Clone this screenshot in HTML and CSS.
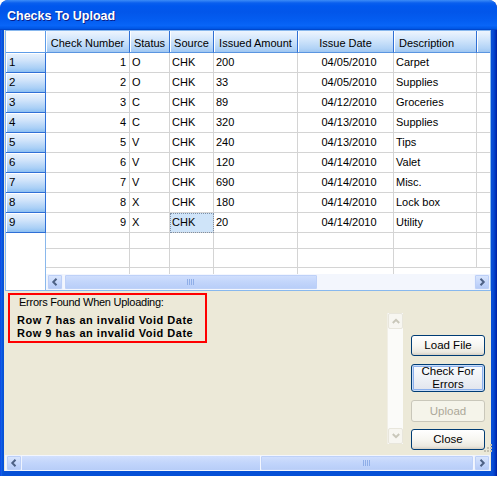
FILE: index.html
```html
<!DOCTYPE html>
<html>
<head>
<meta charset="utf-8">
<title>Checks To Upload</title>
<link rel="stylesheet" href="styles.css">
</head>
<body>
<div class="window">
  <div class="titlebar">Checks To Upload</div>
  <div class="client">
    <div class="grid">
      <div class="rowhdrs">
        <div class="corner"></div>
        <div class="rh">1</div>
        <div class="rh">2</div>
        <div class="rh">3</div>
        <div class="rh">4</div>
        <div class="rh">5</div>
        <div class="rh">6</div>
        <div class="rh">7</div>
        <div class="rh">8</div>
        <div class="rh">9</div>
        <div class="rh-blank"></div>
      </div>
      <div class="gbody">
        <div class="hdr">
          <div class="hc c1">Check Number</div>
          <div class="hc c2">Status</div>
          <div class="hc c3">Source</div>
          <div class="hc c4">Issued Amount</div>
          <div class="hc c5">Issue Date</div>
          <div class="hc c6 left">Description</div>
          <div class="hc c7"></div>
        </div>
        <div class="row"><div class="cell c1 num">1</div><div class="cell c2">O</div><div class="cell c3">CHK</div><div class="cell c4">200</div><div class="cell c5 date">04/05/2010</div><div class="cell c6">Carpet</div><div class="cell c7"></div></div>
        <div class="row"><div class="cell c1 num">2</div><div class="cell c2">O</div><div class="cell c3">CHK</div><div class="cell c4">33</div><div class="cell c5 date">04/05/2010</div><div class="cell c6">Supplies</div><div class="cell c7"></div></div>
        <div class="row"><div class="cell c1 num">3</div><div class="cell c2">C</div><div class="cell c3">CHK</div><div class="cell c4">89</div><div class="cell c5 date">04/12/2010</div><div class="cell c6">Groceries</div><div class="cell c7"></div></div>
        <div class="row"><div class="cell c1 num">4</div><div class="cell c2">C</div><div class="cell c3">CHK</div><div class="cell c4">320</div><div class="cell c5 date">04/13/2010</div><div class="cell c6">Supplies</div><div class="cell c7"></div></div>
        <div class="row"><div class="cell c1 num">5</div><div class="cell c2">V</div><div class="cell c3">CHK</div><div class="cell c4">240</div><div class="cell c5 date">04/13/2010</div><div class="cell c6">Tips</div><div class="cell c7"></div></div>
        <div class="row"><div class="cell c1 num">6</div><div class="cell c2">V</div><div class="cell c3">CHK</div><div class="cell c4">120</div><div class="cell c5 date">04/14/2010</div><div class="cell c6">Valet</div><div class="cell c7"></div></div>
        <div class="row"><div class="cell c1 num">7</div><div class="cell c2">V</div><div class="cell c3">CHK</div><div class="cell c4">690</div><div class="cell c5 date">04/14/2010</div><div class="cell c6">Misc.</div><div class="cell c7"></div></div>
        <div class="row"><div class="cell c1 num">8</div><div class="cell c2">X</div><div class="cell c3">CHK</div><div class="cell c4">180</div><div class="cell c5 date">04/14/2010</div><div class="cell c6">Lock box</div><div class="cell c7"></div></div>
        <div class="row"><div class="cell c1 num">9</div><div class="cell c2">X</div><div class="cell c3 sel">CHK</div><div class="cell c4">20</div><div class="cell c5 date">04/14/2010</div><div class="cell c6">Utility</div><div class="cell c7"></div></div>
        <div class="row e1"><div class="cell c1"></div><div class="cell c2"></div><div class="cell c3"></div><div class="cell c4"></div><div class="cell c5"></div><div class="cell c6"></div><div class="cell c7"></div></div>
        <div class="row e2"><div class="cell c1"></div><div class="cell c2"></div><div class="cell c3"></div><div class="cell c4"></div><div class="cell c5"></div><div class="cell c6"></div><div class="cell c7"></div></div>
        <div class="row e3"><div class="cell c1"></div><div class="cell c2"></div><div class="cell c3"></div><div class="cell c4"></div><div class="cell c5"></div><div class="cell c6 nol"></div><div class="cell c7"></div></div>
        <div class="hsb">
          <div class="sbtn"><svg width="8" height="8" viewBox="0 0 8 8"><path d="M5.5 0.8 L2.3 4 L5.5 7.2" stroke="#4d6185" stroke-width="2" fill="none"/></svg></div>
          <div class="thumb t-grid"><svg width="8" height="6" viewBox="0 0 8 6"><path d="M0.5 0V6M2.5 0V6M4.5 0V6M6.5 0V6" stroke="#8faee8" stroke-width="1"/></svg></div>
          <div class="track"></div>
          <div class="sbtn"><svg width="8" height="8" viewBox="0 0 8 8"><path d="M2.5 0.8 L5.7 4 L2.5 7.2" stroke="#4d6185" stroke-width="2" fill="none"/></svg></div>
        </div>
      </div>
    </div>

    <div class="lower">
      <div class="errors">
        <div class="err-title">Errors Found When Uploading:</div>
        <div class="err-line">Row 7 has an invalid Void Date</div>
        <div class="err-line">Row 9 has an invalid Void Date</div>
      </div>
      <div class="vsb">
        <div class="vbtn"><svg width="8" height="6" viewBox="0 0 8 6"><path d="M0.8 5 L4 1.8 L7.2 5" stroke="#c9c7ba" stroke-width="2" fill="none"/></svg></div>
        <div class="vtrack"></div>
        <div class="vbtn"><svg width="8" height="6" viewBox="0 0 8 6"><path d="M0.8 1 L4 4.2 L7.2 1" stroke="#c9c7ba" stroke-width="2" fill="none"/></svg></div>
      </div>
      <div class="buttons">
        <div class="btn b-load">Load File</div>
        <div class="btn b-check default">Check For<br>Errors</div>
        <div class="btn b-upload disabled">Upload</div>
        <div class="btn b-close">Close</div>
      </div>
      <svg class="grip" width="8" height="10" viewBox="0 0 8 10">
        <rect x="6" y="0" width="2" height="2" fill="#c5c2b2"/>
        <rect x="3" y="3" width="2" height="2" fill="#c5c2b2"/>
        <rect x="6" y="3" width="2" height="2" fill="#c5c2b2"/>
        <rect x="0" y="6" width="2" height="2" fill="#c5c2b2"/>
        <rect x="3" y="6" width="2" height="2" fill="#c5c2b2"/>
        <rect x="6" y="6" width="2" height="2" fill="#c5c2b2"/>
      </svg>
    </div>

    <div class="hsb wide">
      <div class="sbtn"><svg width="8" height="8" viewBox="0 0 8 8"><path d="M5.5 0.8 L2.3 4 L5.5 7.2" stroke="#4d6185" stroke-width="2" fill="none"/></svg></div>
      <div class="track blue"></div>
      <div class="thumb t-wide"><svg width="8" height="6" viewBox="0 0 8 6"><path d="M0.5 0V6M2.5 0V6M4.5 0V6M6.5 0V6" stroke="#8faee8" stroke-width="1"/></svg></div>
      <div class="sbtn"><svg width="8" height="8" viewBox="0 0 8 8"><path d="M2.5 0.8 L5.7 4 L2.5 7.2" stroke="#4d6185" stroke-width="2" fill="none"/></svg></div>
    </div>
  </div>
</div>
</body>
</html>
```

FILE: styles.css
```css
* { box-sizing: border-box; }

body {
  margin: 0;
  background: #ffffff;
  font-family: "Liberation Sans", Arial, sans-serif;
  font-size: 11px;
  color: #000;
}

.window {
  width: 497px;
  height: 476px;
  border-radius: 8px 8px 0 0;
  background: linear-gradient(to right, #0831d9 0, #166aee 1px, #0855dd 2px, #0650d6 4px, #0650d6 491px, #0a4cd4 493px, #003bc4 495px, #001ea0 497px);
  display: flex;
  flex-direction: column;
  overflow: hidden;
}

.titlebar {
  height: 30px;
  padding: 9px 0 0 7px;
  line-height: 15px;
  color: #ffffff;
  font-weight: bold;
  font-size: 12.5px;
  text-shadow: 1px 1px 0 #0a1f8a;
  background: linear-gradient(to bottom, #3c8cf7 0, #0a5fee 3px, #0058ee 6px, #0256ea 40%, #045ef2 70%, #0865f8 85%, #0057e6 95%, #003fc0 100%);
  border-radius: 8px 8px 0 0;
}

.client {
  margin: 0 6px 0 4px;
  height: 441px;
  background: #ece9d8;
  display: flex;
  flex-direction: column;
}

.grid {
  margin-left: 1px;
  width: 486px;
  height: 261px;
  border: 1px solid #88b8ee;
  background: #ffffff;
  display: flex;
}

.rowhdrs {
  width: 40px;
  display: flex;
  flex-direction: column;
}

.corner {
  height: 22px;
  border-right: 1px solid #5d9ce8;
  border-bottom: 1px solid #5d9ce8;
  background: #ffffff;
}

.rh {
  height: 20px;
  padding-left: 3px;
  line-height: 19px;
  font-size: 11.5px;
  background: linear-gradient(to bottom, #eaf3fd 0%, #cfe3fa 40%, #a9cff6 80%, #8cbff2 100%);
  border-right: 1px solid #2e6fd6;
  border-bottom: 1px solid #2e6fd6;
  box-shadow: inset 1px 1px 0 #ffffff;
}

.rh-blank {
  flex: 1;
  border-right: 1px solid #8ab8ec;
  background: #ffffff;
}

.gbody {
  width: 444px;
  display: flex;
  flex-direction: column;
}

.hdr {
  height: 22px;
  display: flex;
}

.hc {
  height: 22px;
  padding-top: 3px;
  line-height: 18px;
  text-align: center;
  white-space: nowrap;
  background: linear-gradient(to bottom, #eef5fe 0%, #cfe4fb 45%, #b0d2f6 85%, #9ec6f1 100%);
  border-right: 1px solid #2f6fd4;
  border-bottom: 1px solid #5a95e0;
  box-shadow: inset 1px 0 0 #ffffff;
}

.hc.left { text-align: left; padding-left: 5px; }
.hc.c7 { border-right: none; }

.c1 { width: 84px; }
.c2 { width: 40px; }
.c3 { width: 44px; }
.c4 { width: 84px; }
.c5 { width: 96px; }
.c6 { width: 83px; }
.c7 { width: 13px; }

.row {
  height: 20px;
  display: flex;
}

.cell {
  height: 100%;
  line-height: 19px;
  padding-left: 2px;
  white-space: nowrap;
  border-right: 1px solid #d4d4d4;
  border-bottom: 1px solid #d4d4d4;
}

.cell.c7 { border-right: none; }
.cell.num { text-align: right; padding-right: 3px; }
.cell.date { text-align: center; padding-left: 7px; }

.cell.sel {
  background: #cfe4f9;
  outline: 1px dotted #7d8fa6;
  outline-offset: -1px;
}

.row.e1 { height: 16px; }
.row.e2 { height: 19px; }
.row.e3 { height: 6px; }
.row.e3 .cell { border-bottom: none; }
.row.e3 .cell.nol { border-right: 1px solid #ffffff; }

.hsb {
  height: 16px;
  display: flex;
  background: #f3f6fd;
}

.sbtn {
  width: 16px;
  height: 16px;
  flex: none;
  border: 1px solid #eef3fe;
  border-radius: 2px;
  background: linear-gradient(to bottom, #dbe7fd 0%, #c3d5fb 60%, #b3c9f6 100%);
  box-shadow: inset 0 0 0 1px #bccff7;
  display: flex;
  align-items: center;
  justify-content: center;
}

.thumb {
  height: 16px;
  border: 1px solid #f3f6fe;
  border-radius: 2px;
  background: linear-gradient(to bottom, #d2e0fd 0%, #c2d5fb 50%, #b7cdf8 100%);
  box-shadow: inset 0 0 0 1px #bed1f8;
  display: flex;
  align-items: center;
  justify-content: center;
}

.t-grid { width: 254px; margin-left: 1px; }
.track { flex: 1; }
.hsb .sbtn:first-child { margin-left: 1px; }

.lower {
  position: relative;
  height: 164px;
  display: flex;
  align-items: flex-start;
}

.errors {
  margin: 2px 0 0 4px;
  width: 199px;
  height: 50px;
  border: 2px solid #ff0000;
}

.err-title {
  padding: 1px 0 0 9px;
  line-height: 13px;
  letter-spacing: -0.25px;
}

.err-line {
  padding-left: 7px;
  font-weight: bold;
  font-size: 11px;
  letter-spacing: 0.5px;
  line-height: 12.5px;
}

.err-title + .err-line { margin-top: 5px; }

.vsb {
  margin: 22px 0 0 auto;
  width: 16px;
  height: 131px;
  display: flex;
  flex-direction: column;
  background: #fbfbf9;
  border-left: 1px solid #f1efe6;
}

.vbtn {
  width: 15px;
  height: 16px;
  border: 1px solid #e8e6dc;
  border-radius: 2px;
  background: #f7f6f1;
  display: flex;
  align-items: center;
  justify-content: center;
}

.vtrack { flex: 1; }

.buttons {
  margin: 44px 6px 0 8px;
  width: 74px;
  display: flex;
  flex-direction: column;
}

.btn {
  border: 1px solid #003c74;
  border-radius: 3px;
  background: linear-gradient(to bottom, #ffffff 0%, #f7f6f1 50%, #ece9e0 85%, #d6d0c5 100%);
  text-align: center;
  line-height: 13px;
  font-size: 11.5px;
}

.b-load { height: 21px; padding-top: 3px; }
.b-check { height: 28px; margin-top: 8px; padding-top: 0px; line-height: 13px; }
.b-upload { height: 22px; margin-top: 8px; padding-top: 4px; }
.b-close { height: 21px; margin-top: 7px; padding-top: 3px; }

.btn.default {
  box-shadow: inset 0 0 0 1px #c8dcf8, inset 0 0 0 2px #8cb0ec;
  background: linear-gradient(to bottom, #fbfcfe 0%, #eef1f6 50%, #e1e4ec 100%);
}

.btn.disabled {
  border-color: #c9c7ba;
  color: #aca899;
  background: #f5f4ea;
}

.grip {
  position: absolute;
  right: -1px;
  bottom: 1px;
}

.hsb.wide {
  margin-left: 1px;
  width: 485px;
}

.track.blue {
  background: linear-gradient(to bottom, #d2e0fd 0%, #c2d5fb 50%, #b7cdf8 100%);
  border-top: 1px solid #f3f6fe;
  border-bottom: 1px solid #f3f6fe;
}

.t-wide { width: 214px; }
```
